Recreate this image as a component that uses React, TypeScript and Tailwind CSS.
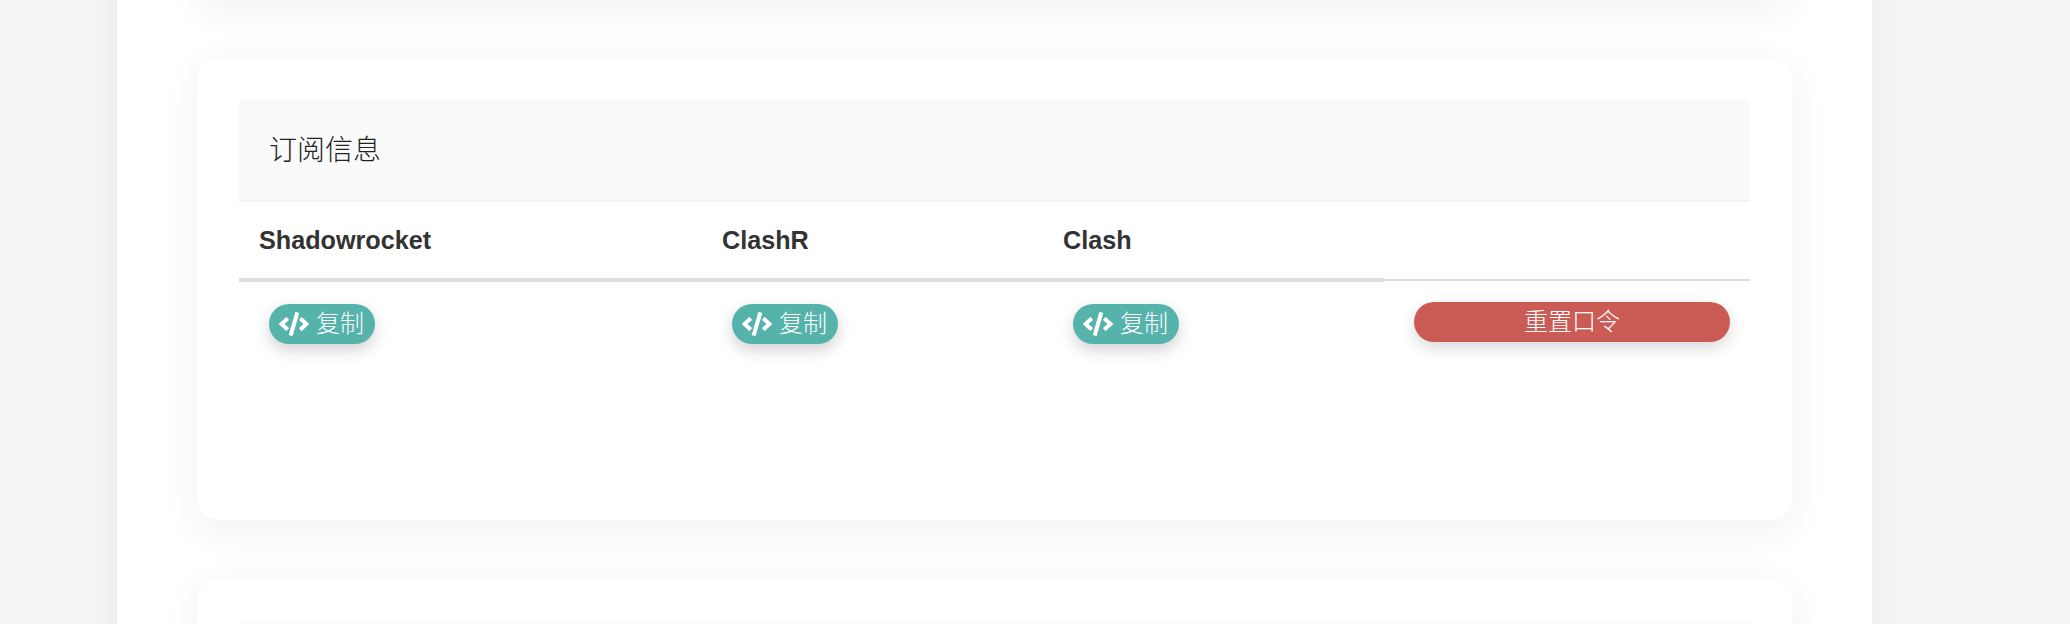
import { FaCode } from "react-icons/fa";

const clients = ["Shadowrocket", "ClashR", "Clash"];

function CopyButton() {
  return (
    <button className="mt-[22px] flex h-10 w-[106px] items-center gap-[7px] rounded-full bg-[#56b3ac] pl-[10px] text-2xl font-light text-white shadow-[0_6px_16px_rgba(0,0,0,0.18)]">
      <FaCode className="h-[24px] w-[30px]" />
      复制
    </button>
  );
}

export default function App() {
  return (
    <div className="h-[624px] overflow-hidden bg-[#f5f5f5] font-['Liberation_Sans','Noto_Sans_CJK_SC',sans-serif] text-[#333]">
      <div className="mx-[117px] h-[700px] w-[1755px] bg-white px-20 shadow-[0_0_40px_rgba(0,0,0,0.05)]">
        <div className="-mt-[40px] mb-[60px] h-[38px] rounded-[22px] bg-white shadow-[0_10px_40px_rgba(0,0,0,0.06)]" />

        <div className="mb-[59px] h-[462px] rounded-[22px] bg-white px-[42px] pt-[42px] shadow-[0_10px_40px_rgba(0,0,0,0.06)]">
          <div className="flex h-[102px] items-center rounded-t-[5px] border-b-2 border-[#f3f3f6] bg-[#fafafa] px-[30px] pt-px text-[28px] font-light text-[#222]">
            订阅信息
          </div>
          <table className="w-[1511px] table-fixed">
            <colgroup>
              <col className="w-[463px]" />
              <col className="w-[341px]" />
              <col className="w-[341px]" />
              <col className="w-[366px]" />
            </colgroup>
            <thead>
              <tr>
                {clients.map((name) => (
                  <th key={name} className="h-[78px] border-b-4 border-[#ddd] pl-5 pt-[2px] text-left text-[25.2px] font-bold">
                    {name}
                  </th>
                ))}
                <th className="border-b-2 border-[#ddd]" />
              </tr>
            </thead>
            <tbody>
              <tr>
                {clients.map((name) => (
                  <td key={name} className="pl-[30px] align-top">
                    <CopyButton />
                  </td>
                ))}
                <td className="pl-[30px] pr-5 align-top">
                  <button className="mt-[21px] h-10 w-full rounded-full bg-[#cb5c55] text-2xl font-light text-white shadow-[0_6px_16px_rgba(0,0,0,0.15)]">
                    重置口令
                  </button>
                </td>
              </tr>
            </tbody>
          </table>
        </div>

        <div className="h-[200px] rounded-[22px] bg-white px-[42px] pt-[42px] shadow-[0_10px_40px_rgba(0,0,0,0.06)]">
          <div className="h-[102px] rounded-t-[5px] bg-[#fafafa]" />
        </div>
      </div>
    </div>
  );
}
